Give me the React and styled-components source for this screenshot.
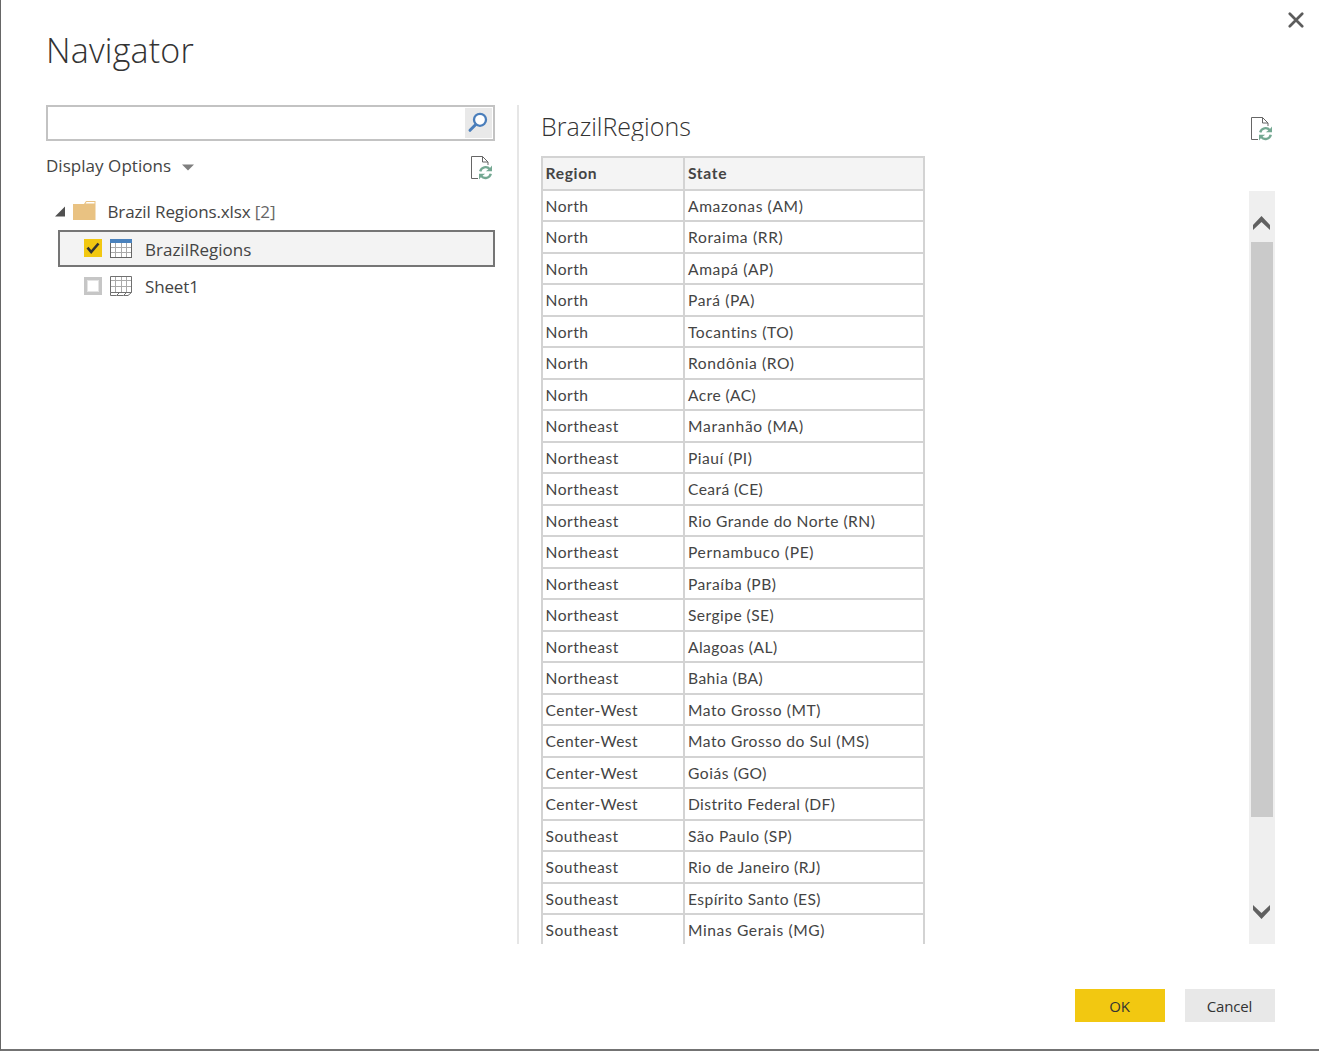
import React from "react";
import styled, { createGlobalStyle } from "styled-components";

const GlobalStyle = createGlobalStyle`
  * { box-sizing: border-box; }
  body { margin: 0; background: #fff; }
`;

const ui = `"Open Sans", "Noto Sans", sans-serif`;

const Dialog = styled.main`
  width: 1319px;
  height: 1051px;
  display: flex;
  flex-direction: column;
  background: #fff;
  border-left: 1px solid #666;
  border-bottom: 2px solid #737373;
  font-family: ${ui};
  color: #444;
  overflow: hidden;
`;
const Header = styled.header`
  height: 105px;
  flex: none;
  display: flex;
  justify-content: space-between;
  align-items: flex-start;
  padding: 12px 15px 0 45px;
`;
const Title = styled.h1`
  margin: 13px 0 0;
  font-size: 34px;
  line-height: 50px;
  font-weight: 300;
  letter-spacing: 0.2px;
  color: #333;
`;
const IconButton = styled.button`
  display: flex;
  padding: 0;
  border: 0;
  background: none;
`;
const Body = styled.div`
  flex: none;
  height: 839px;
  display: flex;
  padding: 0 44px 0 45px;
`;
const Sidebar = styled.section`
  width: 449px;
  display: flex;
  flex-direction: column;
`;
const SearchBox = styled.div`
  height: 36px;
  display: flex;
  border: 2px solid #c3c3c3;
  padding: 1px 1px 1px 0;
`;
const SearchInput = styled.input`
  flex: 1;
  min-width: 0;
  border: 0;
  outline: 0;
  padding: 0 8px;
  background: none;
  font: 17px ${ui};
`;
const SearchButton = styled(IconButton)`
  width: 27px;
  background: #e9e9e9;
`;
const OptionsRow = styled.div`
  height: 52px;
  display: flex;
  justify-content: space-between;
  align-items: flex-start;
  padding: 13px 2px 0 0;
`;
const OptionsButton = styled.button`
  display: flex;
  align-items: center;
  gap: 11px;
  height: 24px;
  padding: 0;
  border: 0;
  background: none;
  font: 17px/24px ${ui};
  letter-spacing: 0.04px;
  color: #444;
`;
const CaretSvg = styled.svg`
  margin-top: 3px;
`;
const RefreshSvg = styled.svg`
  flex: none;
  margin-top: ${(p) => p.$drop || 0}px;
`;
const Label = styled.span`
  font-size: 17px;
  line-height: 24px;
  padding-top: ${(p) => p.$drop || 0}px;
  letter-spacing: ${(p) => p.$spacing || 0}px;
  color: #444;
  white-space: pre;
`;
const Count = styled.span`
  color: #666;
`;
const FolderRow = styled.div`
  height: 37px;
  display: flex;
  align-items: center;
  padding-left: 9px;
`;
const FolderSvg = styled.svg`
  margin: 0 11.5px 3px 7px;
`;
const TreeItem = styled.div`
  height: 37px;
  margin-left: 12px;
  display: flex;
  align-items: center;
  padding-left: 24px;
  border: 2px solid ${(p) => (p.$selected ? "#757575" : "transparent")};
  background: ${(p) => (p.$selected ? "#f3f3f3" : "transparent")};
`;
const Checkbox = styled.span`
  width: 18px;
  height: 18px;
  margin: ${(p) => (p.$checked ? "0 8px 1px 0" : "1px 8px 0 0")};
  display: flex;
  background: ${(p) => (p.$checked ? "#f2c811" : "#fff")};
  border: ${(p) => (p.$checked ? "0" : "3px solid #c6c6c6")};
  box-shadow: ${(p) => (p.$checked ? "none" : "inset 0 0 0 1px #e4e4e4")};
`;
const SheetSvg = styled.svg`
  margin-right: 13px;
`;
const Divider = styled.div`
  width: 2px;
  margin: 0 22px;
  background: #e6e6e6;
`;
const Preview = styled.section`
  flex: 1;
  display: flex;
  flex-direction: column;
`;
const PreviewHeader = styled.div`
  height: 51px;
  display: flex;
  justify-content: space-between;
  align-items: flex-start;
  padding: 12px 2px 0 0;
`;
const PreviewTitle = styled.h2`
  margin: -9px 0 0;
  height: 33px;
  overflow: hidden;
  font-size: 25px;
  line-height: 36px;
  font-weight: 300;
  color: #333;
`;
const PreviewBody = styled.div`
  height: 788px;
  display: flex;
  justify-content: space-between;
  align-items: stretch;
  overflow: hidden;
`;
const Table = styled.div`
  width: 384px;
  border: 2px solid #d3d3d3;
  border-bottom: 0;
  overflow: hidden;
  font-family: Lato, "Open Sans", sans-serif;
`;
const Row = styled.div`
  display: grid;
  grid-template-columns: 142px 238px;
  height: ${(p) => (p.$head ? 32.9 : 31.5)}px;
  border-bottom: 2px solid #d3d3d3;
  background: ${(p) => (p.$head ? "#f4f4f4" : "#fff")};
  font-weight: ${(p) => (p.$head ? 700 : 400)};
`;
const Cell = styled.div`
  padding-left: ${(p) => (p.$first ? 2.5 : 3)}px;
  border-right: ${(p) => (p.$first ? "2px solid #d3d3d3" : "0")};
  font-size: 15.6px;
  line-height: 30px;
  letter-spacing: ${(p) => p.$spacing || 0}px;
  white-space: nowrap;
  color: #444;
`;
const Scrollbar = styled.div`
  width: 26px;
  margin-top: 35px;
  display: flex;
  flex-direction: column;
  align-items: center;
  background: #efefef;
`;
const ScrollArrow = styled.svg`
  flex: none;
`;
const Thumb = styled.div`
  width: 22px;
  height: 575px;
  background: #cacaca;
`;
const Footer = styled.footer`
  flex: 1;
  display: flex;
  justify-content: flex-end;
  align-items: flex-start;
  gap: 20px;
  padding: 45px 44px 0 0;
`;
const Button = styled.button`
  width: 90px;
  height: 33px;
  padding: 0 1px 0 0;
  border: 0;
  background: ${(p) => (p.$primary ? "#f2c811" : "#e8e8e8")};
  font: 15px/24px ${ui};
  letter-spacing: -0.15px;
  color: #333;
`;

const RefreshIcon = ({ drop }) => (
  <RefreshSvg $drop={drop} width="22" height="24" viewBox="0 0 22 24" fill="none">
    <path d="M7 22.5H0.5V0.5H11.5L17 6V9" stroke="#666" />
    <path d="M11.5 0.5V6H17" stroke="#666" />
    <path d="M9.2 15.4A5.5 5.5 0 0 1 18.8 13.2M19.8 17.8A5.5 5.5 0 0 1 10.2 20" stroke="#74a892" strokeWidth="2.4" />
    <path d="M21 9.5V15.3H14.8L17.2 13.5L19.4 11.5ZM8 23.5V17.7H14.2L11.8 19.5L9.6 21.5Z" fill="#74a892" />
  </RefreshSvg>
);

const regionSpacing = {
  North: 0.5,
  Northeast: 0.5,
  "Center-West": 0.45,
  Southeast: 0.5,
};

const rows = [
  ["North", "Amazonas (AM)", 0.62],
  ["North", "Roraima (RR)", 0.65],
  ["North", "Amapá (AP)", 0.6],
  ["North", "Pará (PA)", 0.6],
  ["North", "Tocantins (TO)", 0.55],
  ["North", "Rondônia (RO)", 0.6],
  ["North", "Acre (AC)", 0.42],
  ["Northeast", "Maranhão (MA)", 0.7],
  ["Northeast", "Piauí (PI)", 0.5],
  ["Northeast", "Ceará (CE)", 0.42],
  ["Northeast", "Rio Grande do Norte (RN)", 0.47],
  ["Northeast", "Pernambuco (PE)", 0.65],
  ["Northeast", "Paraíba (PB)", 0.5],
  ["Northeast", "Sergipe (SE)", 0.45],
  ["Northeast", "Alagoas (AL)", 0.45],
  ["Northeast", "Bahia (BA)", 0.45],
  ["Center-West", "Mato Grosso (MT)", 0.56],
  ["Center-West", "Mato Grosso do Sul (MS)", 0.52],
  ["Center-West", "Goiás (GO)", 0.5],
  ["Center-West", "Distrito Federal (DF)", 0.4],
  ["Southeast", "São Paulo (SP)", 0.5],
  ["Southeast", "Rio de Janeiro (RJ)", 0.43],
  ["Southeast", "Espírito Santo (ES)", 0.43],
  ["Southeast", "Minas Gerais (MG)", 0.6],
];

export default function App() {
  return (
    <Dialog>
      <GlobalStyle />
      <Header>
        <Title>Navigator</Title>
        <IconButton aria-label="Close">
          <svg width="16" height="16" viewBox="0 0 16 16">
            <path d="M1.8 1.8L14.2 14.2M14.2 1.8L1.8 14.2" stroke="#5c5c5c" strokeWidth="2.7" strokeLinecap="round" />
          </svg>
        </IconButton>
      </Header>
      <Body>
        <Sidebar>
          <SearchBox>
            <SearchInput aria-label="Search" />
            <SearchButton aria-label="Search">
              <svg width="27" height="30" viewBox="0 0 27 30" fill="none" stroke="#4a7ebb">
                <circle cx="15" cy="11.8" r="6" fill="#fff" strokeWidth="2.3" />
                <path d="M10.5 16.7L5 22.3" strokeWidth="3" strokeLinecap="round" />
              </svg>
            </SearchButton>
          </SearchBox>
          <OptionsRow>
            <OptionsButton>
              Display Options
              <CaretSvg width="12" height="7" viewBox="0 0 12 7">
                <path d="M0 0.5H12L6 6.5Z" fill="#7f7f7f" />
              </CaretSvg>
            </OptionsButton>
            <RefreshIcon drop={2} />
          </OptionsRow>
          <FolderRow>
            <svg width="11" height="11" viewBox="0 0 11 11">
              <path d="M10 0.5V10.5H0Z" fill="#505050" />
            </svg>
            <FolderSvg width="23" height="19" viewBox="0 0 23 19">
              <path d="M0 3H11L13 0H22.5V19H0Z" fill="#e9c282" />
              <path d="M12.5 2.5L13.5 1H21.5V2.5Z" fill="#fff" />
            </FolderSvg>
            <Label $spacing={-0.12}>Brazil Regions.xlsx <Count>[2]</Count></Label>
          </FolderRow>
          <TreeItem $selected>
            <Checkbox $checked>
              <svg width="18" height="18" viewBox="0 0 18 18">
                <path d="M3.5 8.7L7.2 13L14.5 4.5" fill="none" stroke="#333" strokeWidth="2.6" />
              </svg>
            </Checkbox>
            <SheetSvg width="22" height="19" viewBox="0 0 22 19">
              <rect x="0.5" y="0.5" width="21" height="18" fill="#fff" stroke="#666" />
              <path d="M5.5 4V18M11.5 4V18M16.5 4V18M1 8.5H21M1 13.5H21" stroke="#aaa" />
              <path d="M0 0H22V4H0Z" fill="#4a82bd" />
            </SheetSvg>
            <Label $drop={2}>BrazilRegions</Label>
          </TreeItem>
          <TreeItem>
            <Checkbox />
            <SheetSvg width="22" height="20" viewBox="0 0 22 20">
              <path d="M5.5 1V16M11.5 1V16M16.5 1V16M1 4.5H21M1 10.5H21" stroke="#aaa" />
              <path d="M0.5 0.5H21.5V16.5H0.5ZM0.5 16.5V19.5H6.5L9.5 16.5M7 19.5H13.5L16.5 16.5M14 19.5H18L21.5 16.5" fill="none" stroke="#707070" />
            </SheetSvg>
            <Label $drop={2} $spacing={-0.15}>Sheet1</Label>
          </TreeItem>
        </Sidebar>
        <Divider />
        <Preview>
          <PreviewHeader>
            <PreviewTitle>BrazilRegions</PreviewTitle>
            <RefreshIcon />
          </PreviewHeader>
          <PreviewBody>
            <Table>
              <Row $head>
                <Cell $first $spacing={0.65}>Region</Cell>
                <Cell $spacing={0.65}>State</Cell>
              </Row>
              {rows.map(([region, state, spacing]) => (
                <Row key={state}>
                  <Cell $first $spacing={regionSpacing[region]}>{region}</Cell>
                  <Cell $spacing={spacing}>{state}</Cell>
                </Row>
              ))}
            </Table>
            <Scrollbar>
              <ScrollArrow width="26" height="51" viewBox="0 0 26 51">
                <path d="M4 34V39L12.5 31L21 39V34L12.5 25Z" fill="#606060" />
              </ScrollArrow>
              <Thumb />
              <ScrollArrow width="26" height="127" viewBox="0 0 26 127">
                <path d="M4 88V93L12.5 102L21 93V88L12.5 96Z" fill="#606060" />
              </ScrollArrow>
            </Scrollbar>
          </PreviewBody>
        </Preview>
      </Body>
      <Footer>
        <Button $primary>OK</Button>
        <Button>Cancel</Button>
      </Footer>
    </Dialog>
  );
}
